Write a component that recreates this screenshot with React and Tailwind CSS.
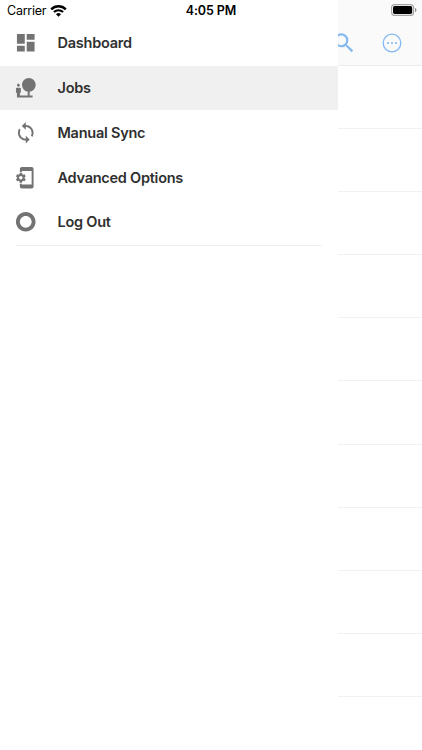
import {
  MdDashboard,
  MdNaturePeople,
  MdLoop,
  MdPhonelinkSetup,
  MdTripOrigin,
  MdSearch,
} from "react-icons/md";

const menuItems = [
  { label: "Dashboard", icon: MdDashboard },
  { label: "Jobs", icon: MdNaturePeople, active: true },
  { label: "Manual Sync", icon: MdLoop },
  { label: "Advanced Options", icon: MdPhonelinkSetup },
  { label: "Log Out", icon: MdTripOrigin },
];

const rows = Array.from({ length: 10 });

function WifiIcon() {
  return (
    <svg width="17" height="12" viewBox="0 0 17 12" fill="none" stroke="#000">
      <path d="M1.2 4.3a10.4 10.4 0 0 1 14.6 0" strokeWidth="2.4" />
      <path d="M3.9 7.1a6.5 6.5 0 0 1 9.2 0" strokeWidth="2.1" />
      <path d="M8.5 11.7 6 9.2a3.6 3.6 0 0 1 5 0z" fill="#000" stroke="none" />
    </svg>
  );
}

function BatteryIcon() {
  return (
    <svg width="26" height="12" viewBox="0 0 26 12" fill="none">
      <rect x="0.6" y="0.6" width="22" height="10.8" rx="3" stroke="#a5a5a5" strokeWidth="1.1" />
      <rect x="2" y="2" width="19.2" height="8" rx="1.7" fill="#000" />
      <path d="M24 4v4c.9-.3 1.4-1.1 1.4-2S24.9 4.3 24 4z" fill="#8c8c8c" />
    </svg>
  );
}

function MoreIcon() {
  return (
    <svg width="20" height="20" viewBox="0 0 20 20" fill="none">
      <circle cx="10" cy="10" r="8.8" stroke="#84b9ef" strokeWidth="1.3" />
      <circle cx="6" cy="10" r="1.1" fill="#84b9ef" />
      <circle cx="10" cy="10" r="1.1" fill="#84b9ef" />
      <circle cx="14" cy="10" r="1.1" fill="#84b9ef" />
    </svg>
  );
}

function StatusBar() {
  return (
    <div className="absolute inset-x-0 top-0 z-20 grid h-[21px] grid-cols-3 items-center pr-[5px] pl-[7px] text-black">
      <div className="flex items-center gap-1 text-[12.5px]">
        <span className="pt-0.5 tracking-[-0.25px]">Carrier</span>
        <WifiIcon />
      </div>
      <span className="pt-0.5 pr-0.5 text-center text-[12.5px] font-semibold tracking-[-0.1px]">
        4:05 PM
      </span>
      <div className="flex justify-end pb-px">
        <BatteryIcon />
      </div>
    </div>
  );
}

function JobsPage() {
  return (
    <main>
      <header className="flex h-[66px] items-end justify-end border-b border-[#ebebeb] bg-[#fafafa] pr-5 pb-[9px]">
        <div className="flex items-center gap-[25px]">
          <MdSearch className="size-[26px] text-[#84b9ef]" />
          <MoreIcon />
        </div>
      </header>
      {rows.map((_, i) => (
        <div key={i} className="h-[63.1px] border-b border-[#f1f1f1]" />
      ))}
    </main>
  );
}

function Drawer() {
  return (
    <aside className="absolute inset-y-0 left-0 z-10 w-[338px] bg-white pt-[20.8px]">
      <nav>
        {menuItems.map(({ label, icon: Icon, active }) => (
          <div
            key={label}
            className={`flex h-[44.75px] items-center gap-5 pl-[14px] ${active ? "bg-[#f0f0f0]" : ""}`}
          >
            <Icon className="size-[23.5px] shrink-0 text-[#737373]" />
            <span className="text-[14.5px] font-semibold tracking-[-0.25px] text-[#303030]">
              {label}
            </span>
          </div>
        ))}
      </nav>
      <div className="mx-4 border-t border-[#f0f0f0]" />
    </aside>
  );
}

export default function App() {
  return (
    <div className="relative h-[750px] w-[422px] overflow-hidden bg-white font-['Inter','Liberation_Sans',sans-serif]">
      <JobsPage />
      <Drawer />
      <StatusBar />
    </div>
  );
}
